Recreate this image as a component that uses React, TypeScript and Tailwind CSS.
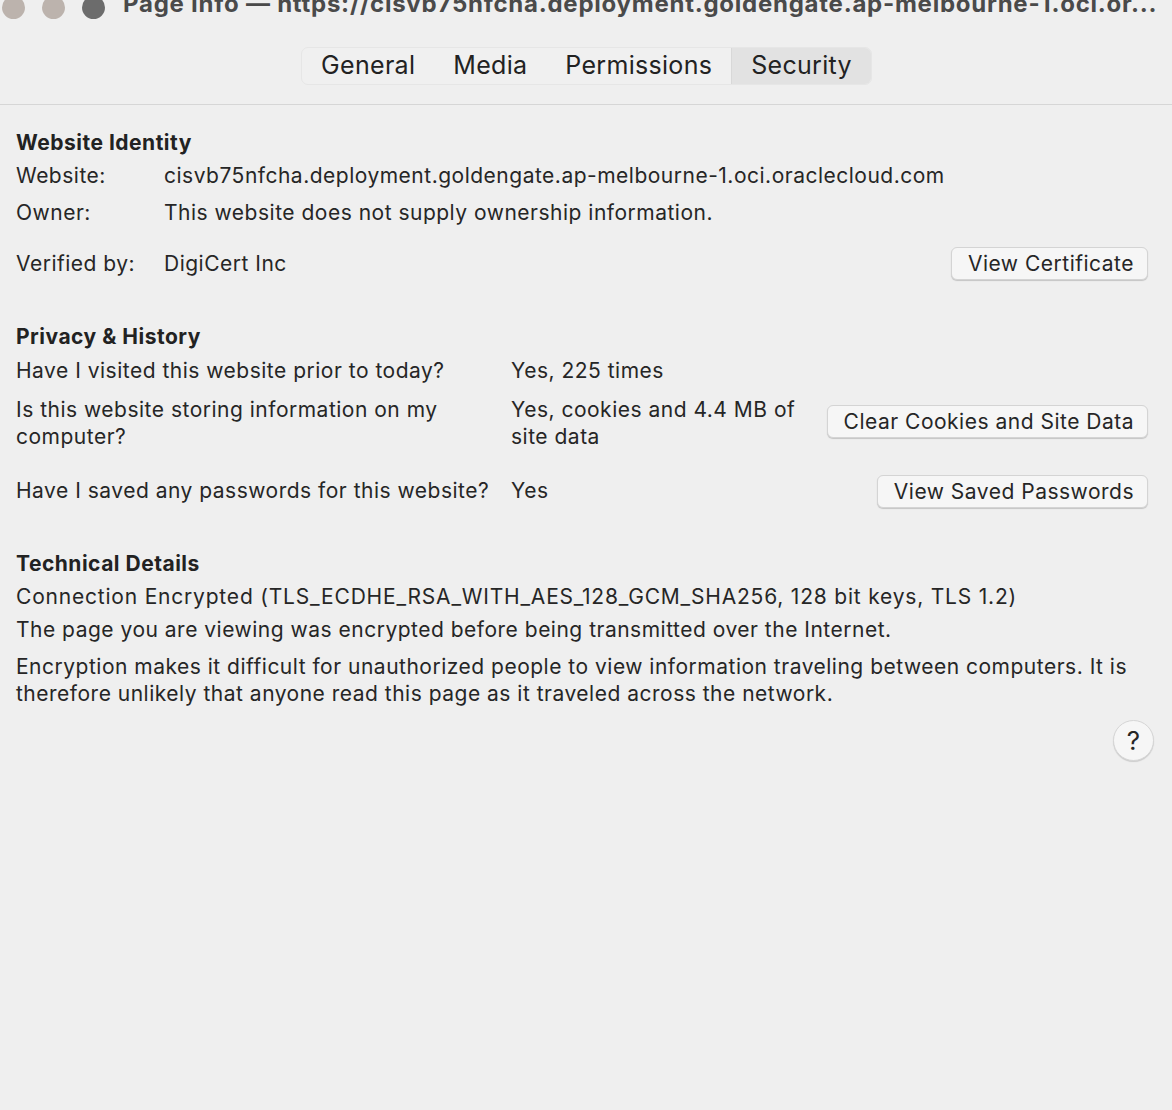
import React from "react";

const tabs = ["General", "Media", "Permissions", "Security"];

const MacButton = ({ children }: { children: React.ReactNode }) => (
  <button className="h-[33px] rounded-[6px] border border-[#d4d4d4] bg-[#f6f6f6] pl-[16px] pr-[13px] text-[21px] leading-none tracking-[0.5px] text-[#262626] shadow-[0_1px_1px_rgba(0,0,0,0.18)]">
    {children}
  </button>
);

const App = () => {
  return (
    <div className="h-[1110px] w-[1172px] overflow-hidden bg-[#efefef] font-['Inter','Noto_Sans',sans-serif] text-[21px] tracking-[0.5px] text-[#262626]">
      {/* title bar */}
      <div className="flex h-[20px] items-center">
        <div className="ml-[2px] flex gap-[17px]">
          <span className="-mt-[6px] block h-[23px] w-[23px] rounded-full bg-[#bcb3ad]" />
          <span className="-mt-[6px] block h-[23px] w-[23px] rounded-full bg-[#bcb3ad]" />
          <span className="-mt-[6px] block h-[23px] w-[23px] rounded-full bg-[#6c6c6c]" />
        </div>
        <div className="-mt-[12px] ml-[18px] whitespace-nowrap text-[24px] font-bold tracking-[0.75px] text-[#4a4a4a]">
          Page Info — https://cisvb75nfcha.deployment.goldengate.ap-melbourne-1.oci.or...
        </div>
      </div>

      {/* tabs */}
      <div className="mt-[27px] flex justify-center pl-[1px]">
        <div className="flex h-[38px] overflow-hidden rounded-[7px] border border-[#e6e6e6] bg-[#f0f0f0]">
          {tabs.map((t) => (
            <div
              key={t}
              className={
                t === "Security"
                  ? "flex items-center border-l border-[#d8d8d8] bg-[#e2e2e2] px-[19px] text-[25px] tracking-[0.3px] text-[#222]"
                  : "flex items-center px-[19px] text-[25px] tracking-[0.3px] text-[#222]"
              }
            >
              {t}
            </div>
          ))}
        </div>
      </div>

      <div className="mt-[19px] h-px bg-[#d6d6d6]" />

      <div className="px-[16px] pt-[26px]">
        {/* Website Identity */}
        <div className="font-bold leading-[24px] text-[#222]">Website Identity</div>
        <div className="mt-[9px] flex leading-[24px]">
          <span className="w-[148px]">Website:</span>
          <span>cisvb75nfcha.deployment.goldengate.ap-melbourne-1.oci.oraclecloud.com</span>
        </div>
        <div className="mt-[13px] flex leading-[24px]">
          <span className="w-[148px]">Owner:</span>
          <span>This website does not supply ownership information.</span>
        </div>
        <div className="mt-[22px] flex items-center justify-between pr-[8px]">
          <div className="flex leading-[24px]">
            <span className="w-[148px]">Verified by:</span>
            <span>DigiCert Inc</span>
          </div>
          <MacButton>View Certificate</MacButton>
        </div>

        {/* Privacy & History */}
        <div className="mt-[45px] font-bold leading-[24px] text-[#222]">Privacy &amp; History</div>
        <div className="mt-[10px] flex leading-[24px]">
          <span className="w-[495px]">Have I visited this website prior to today?</span>
          <span>Yes, 225 times</span>
        </div>
        <div className="mt-[13px] flex items-center pr-[8px]">
          <span className="w-[495px] leading-[27px]">
            Is this website storing information on my
            <br />
            computer?
          </span>
          <span className="w-[300px] leading-[27px]">
            Yes, cookies and 4.4 MB of
            <br />
            site data
          </span>
          <div className="-mt-[3px] flex flex-1 justify-end">
            <MacButton>Clear Cookies and Site Data</MacButton>
          </div>
        </div>
        <div className="mt-[24px] flex items-center pr-[8px]">
          <span className="-mt-[1px] w-[495px] leading-[24px]">Have I saved any passwords for this website?</span>
          <span className="-mt-[1px] leading-[24px]">Yes</span>
          <div className="flex flex-1 justify-end pt-[1px]">
            <MacButton>View Saved Passwords</MacButton>
          </div>
        </div>

        {/* Technical Details */}
        <div className="mt-[44px] font-bold leading-[24px] text-[#222]">Technical Details</div>
        <div className="mt-[9px] leading-[24px] tracking-[0.8px]">
          Connection Encrypted (TLS_ECDHE_RSA_WITH_AES_128_GCM_SHA256, 128 bit keys, TLS 1.2)
        </div>
        <div className="mt-[9px] leading-[24px]">
          The page you are viewing was encrypted before being transmitted over the Internet.
        </div>
        <div className="mt-[11px] leading-[27px]">
          Encryption makes it difficult for unauthorized people to view information traveling between computers. It is
          <br />
          therefore unlikely that anyone read this page as it traveled across the network.
        </div>

        <div className="mt-[13px] flex justify-end pr-[2px]">
          <button className="flex h-[41px] w-[41px] items-center justify-center rounded-full border border-[#d6d6d6] bg-[#f6f6f6] text-[26px] leading-none tracking-normal text-[#262626] shadow-[0_1px_1px_rgba(0,0,0,0.15)]">
            ?
          </button>
        </div>
      </div>
    </div>
  );
};

export default App;
